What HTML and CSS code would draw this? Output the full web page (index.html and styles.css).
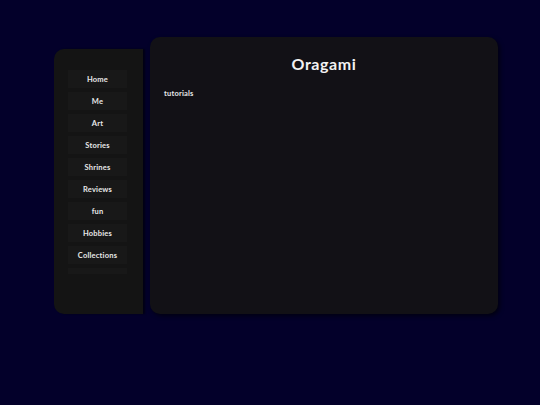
FILE: index.html
```html
<!DOCTYPE html>
<html>
<head>
<meta charset="utf-8">
<link rel="stylesheet" href="styles.css">
</head>
<body>
<div class="page">
  <aside class="sidebar">
    <nav class="nav">
      <a class="nav-item">Home</a>
      <a class="nav-item">Me</a>
      <a class="nav-item">Art</a>
      <a class="nav-item">Stories</a>
      <a class="nav-item">Shrines</a>
      <a class="nav-item">Reviews</a>
      <a class="nav-item">fun</a>
      <a class="nav-item">Hobbies</a>
      <a class="nav-item">Collections</a>
      <a class="nav-item">Links</a>
    </nav>
  </aside>
  <main class="main">
    <h1 class="title">Oragami</h1>
    <p class="sub">tutorials</p>
  </main>
</div>
</body>
</html>
```
FILE: styles.css
```css
html, body {
  margin: 0;
  padding: 0;
  background: #03002a;
  width: 540px;
  height: 405px;
  overflow: hidden;
  font-family: Lato, "Noto Sans", sans-serif;
  color: #e6e6e6;
}
.page {
  display: flex;
  align-items: flex-end;
  gap: 7px;
  padding: 37px 0 0 54px;
}
.sidebar {
  width: 89px;
  height: 265px;
  background: #141414;
  border-radius: 10px 0 0 10px;
  box-shadow: 2px 0 2px rgba(0,0,0,0.55);
  padding-top: 21px;
  box-sizing: border-box;
}
.nav {
  display: flex;
  flex-direction: column;
  align-items: center;
  gap: 4px;
  height: 204px;
  overflow: hidden;
}
.nav-item {
  flex: none;
  width: 59px;
  height: 18px;
  margin-right: 2px;
  background: #181818;
  display: flex;
  align-items: center;
  justify-content: center;
  font-size: 7.5px;
  font-weight: 700;
  color: #e8e8e8;
  letter-spacing: 0.2px;
}
.main {
  width: 348px;
  height: 277px;
  background: #121116;
  border-radius: 10px;
  box-shadow: 2px 2px 4px rgba(0,0,0,0.6);
  box-sizing: border-box;
  padding: 14px 14px;
}
.title {
  margin: 0;
  text-align: center;
  font-size: 16px;
  font-weight: 700;
  color: #f2f2f2;
  line-height: 26px;
  letter-spacing: 0.6px;
}
.sub {
  margin: 12px 0 0 0;
  font-size: 7.5px;
  font-weight: 700;
  color: #e8e8e8;
  letter-spacing: 0.2px;
}
```
